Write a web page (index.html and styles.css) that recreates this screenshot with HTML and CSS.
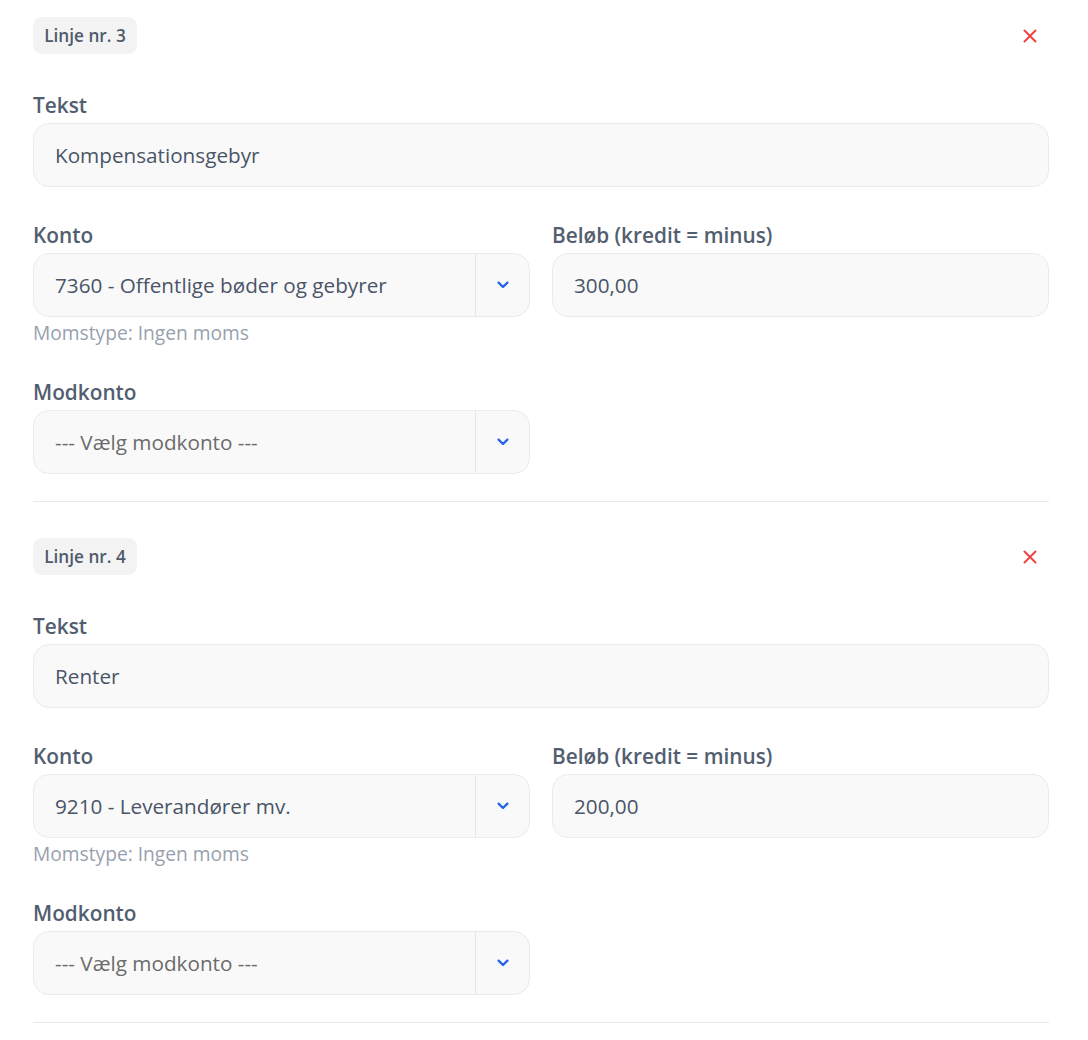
FILE: index.html
```html
<!DOCTYPE html>
<html lang="da">
<head>
<meta charset="utf-8">
<title>Linjer</title>
<link rel="stylesheet" href="styles.css">
</head>
<body>
<div class="lines">
  <section class="line">
    <div class="line-head">
      <span class="badge">Linje nr. 3</span>
      <button class="remove" type="button" aria-label="Fjern">
        <svg width="14" height="14" viewBox="0 0 14 14"><path d="M1.5 1.5L12.5 12.5M12.5 1.5L1.5 12.5" stroke="#ef4444" stroke-width="2" stroke-linecap="round"/></svg>
      </button>
    </div>
    <div class="field">
      <label class="label">Tekst</label>
      <div class="input">Kompensationsgebyr</div>
    </div>
    <div class="row">
      <div class="field">
        <label class="label">Konto</label>
        <div class="select">
          <span class="select-value">7360 - Offentlige bøder og gebyrer</span>
          <span class="select-arrow"><svg width="12" height="8" viewBox="0 0 12 8"><path d="M1.6 1.6L6 6L10.4 1.6" fill="none" stroke="#2563eb" stroke-width="2.3" stroke-linecap="round" stroke-linejoin="round"/></svg></span>
        </div>
        <div class="help">Momstype: Ingen moms</div>
      </div>
      <div class="field">
        <label class="label">Beløb (kredit = minus)</label>
        <div class="input">300,00</div>
      </div>
    </div>
    <div class="row">
      <div class="field">
        <label class="label">Modkonto</label>
        <div class="select">
          <span class="select-value placeholder">--- Vælg modkonto ---</span>
          <span class="select-arrow"><svg width="12" height="8" viewBox="0 0 12 8"><path d="M1.6 1.6L6 6L10.4 1.6" fill="none" stroke="#2563eb" stroke-width="2.3" stroke-linecap="round" stroke-linejoin="round"/></svg></span>
        </div>
      </div>
    </div>
  </section>
  <section class="line">
    <div class="line-head">
      <span class="badge">Linje nr. 4</span>
      <button class="remove" type="button" aria-label="Fjern">
        <svg width="14" height="14" viewBox="0 0 14 14"><path d="M1.5 1.5L12.5 12.5M12.5 1.5L1.5 12.5" stroke="#ef4444" stroke-width="2" stroke-linecap="round"/></svg>
      </button>
    </div>
    <div class="field">
      <label class="label">Tekst</label>
      <div class="input">Renter</div>
    </div>
    <div class="row">
      <div class="field">
        <label class="label">Konto</label>
        <div class="select">
          <span class="select-value">9210 - Leverandører mv.</span>
          <span class="select-arrow"><svg width="12" height="8" viewBox="0 0 12 8"><path d="M1.6 1.6L6 6L10.4 1.6" fill="none" stroke="#2563eb" stroke-width="2.3" stroke-linecap="round" stroke-linejoin="round"/></svg></span>
        </div>
        <div class="help">Momstype: Ingen moms</div>
      </div>
      <div class="field">
        <label class="label">Beløb (kredit = minus)</label>
        <div class="input">200,00</div>
      </div>
    </div>
    <div class="row">
      <div class="field">
        <label class="label">Modkonto</label>
        <div class="select">
          <span class="select-value placeholder">--- Vælg modkonto ---</span>
          <span class="select-arrow"><svg width="12" height="8" viewBox="0 0 12 8"><path d="M1.6 1.6L6 6L10.4 1.6" fill="none" stroke="#2563eb" stroke-width="2.3" stroke-linecap="round" stroke-linejoin="round"/></svg></span>
        </div>
      </div>
    </div>
  </section>
</div>
</body>
</html>
```

FILE: styles.css
```css
* { box-sizing: border-box; }
html, body { margin: 0; padding: 0; background: #ffffff; }
body {
  font-family: "Open Sans", "Noto Sans", sans-serif;
  color: #4a5568;
}
.lines {
  width: 1016px;
  margin-left: 33px;
  padding-top: 17px;
}
.line {
  display: flex;
  flex-direction: column;
  gap: 34px;
  padding-bottom: 27px;
  border-bottom: 1px solid #e8e9eb;
  margin-bottom: 36px;
}
.line-head {
  display: flex;
  justify-content: space-between;
  align-items: center;
  height: 37px;
  margin-bottom: 3px;
}
.badge {
  display: inline-flex;
  align-items: center;
  height: 37px;
  padding: 0 10px;
  width: 104px;
  justify-content: center;
  background: #f3f3f4;
  border-radius: 9px;
  font-size: 17.2px;
  font-weight: 600;
  color: #4f5a6b;
}
.remove {
  width: 38px;
  height: 37px;
  border: 0;
  background: transparent;
  padding: 0;
  display: flex;
  align-items: center;
  justify-content: center;
  cursor: pointer;
}
.field {
  display: flex;
  flex-direction: column;
}
.label {
  font-size: 20.8px;
  font-weight: 600;
  line-height: 28px;
  margin-bottom: 4px;
  color: #525e70;
}
.input, .select {
  height: 64px;
  border: 1px solid #ebebeb;
  background: #f9f9f9;
  border-radius: 16px;
  font-size: 20.7px;
  color: #4a5568;
  display: flex;
  align-items: center;
}
.input { padding: 0 21px; }
.select-value {
  flex: 1;
  padding: 0 21px;
}
.placeholder { color: #6b6b6b; }
.select-arrow {
  width: 54px;
  align-self: stretch;
  border-left: 1px solid #e6e6e6;
  display: flex;
  align-items: center;
  justify-content: center;
}
.select-arrow svg { display: block; }
.row {
  display: grid;
  grid-template-columns: 497px 497px;
  column-gap: 22px;
}
.help {
  margin-top: 5px;
  font-size: 19.2px;
  line-height: 22px;
  color: #97a1ae;
}
```
